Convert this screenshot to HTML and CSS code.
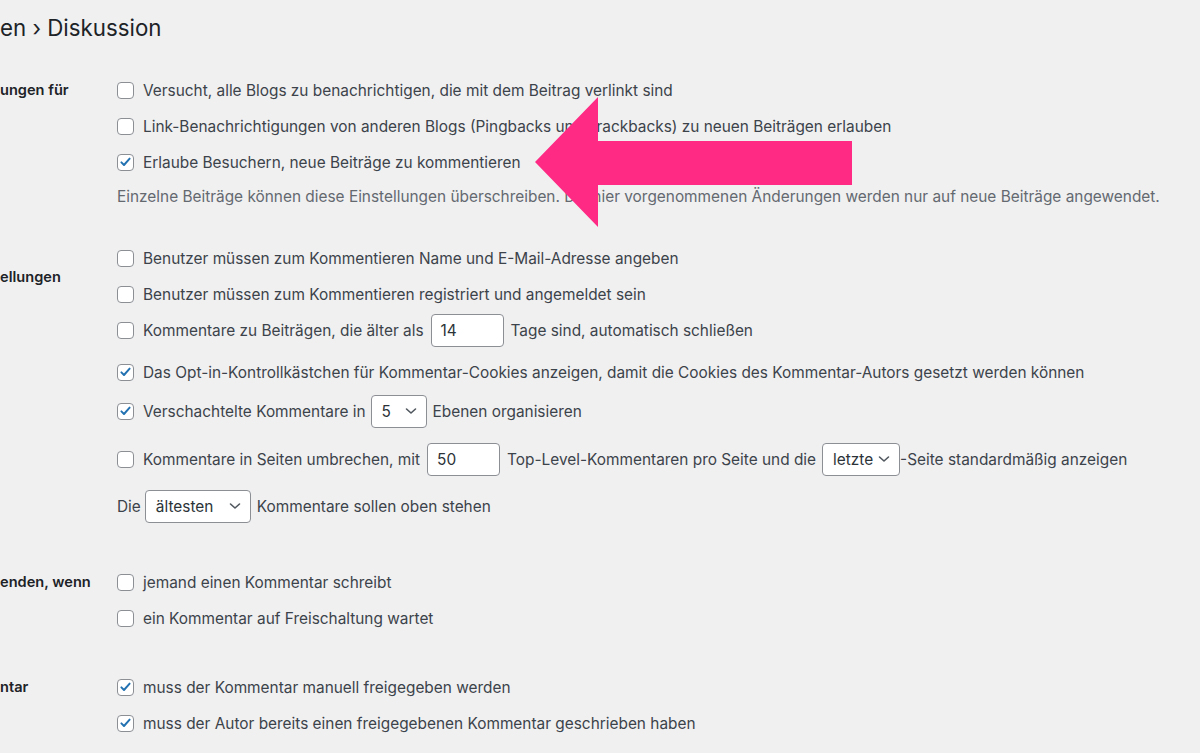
FILE: index.html
```html
<!DOCTYPE html>
<html lang="de">
<head>
<meta charset="UTF-8">
<title>Einstellungen › Diskussion</title>
<link rel="stylesheet" href="styles.css">
</head>
<body>
<div class="wrap">
    <h1>en › Diskussion</h1>

    <div class="section">
        <div class="label">ungen für</div>
        <div class="fields">
            <div class="opt"><span class="cb"></span>Versucht, alle Blogs zu benachrichtigen, die mit dem Beitrag verlinkt sind</div>
            <div class="opt"><span class="cb"></span>Link-Benachrichtigungen von anderen Blogs (Pingbacks und Trackbacks) zu neuen Beiträgen erlauben</div>
            <div class="opt"><span class="cb"><svg viewBox="0 0 20 20"><path d="M4.5 10.5 L8 14 L15.5 5.5"/></svg></span>Erlaube Besuchern, neue Beiträge zu kommentieren</div>
            <p class="desc">Einzelne Beiträge können diese Einstellungen überschreiben. Die hier vorgenommenen Änderungen werden nur auf neue Beiträge angewendet.</p>
        </div>
    </div>

    <div class="section s2">
        <div class="label label-low">ellungen</div>
        <div class="fields">
            <div class="opt"><span class="cb"></span>Benutzer müssen zum Kommentieren Name und E-Mail-Adresse angeben</div>
            <div class="opt"><span class="cb"></span>Benutzer müssen zum Kommentieren registriert und angemeldet sein</div>
            <div class="opt"><span class="cb"></span>Kommentare zu Beiträgen, die älter als <span class="num">14</span> Tage sind, automatisch schließen</div>
            <div class="opt mt6"><span class="cb"><svg viewBox="0 0 20 20"><path d="M4.5 10.5 L8 14 L15.5 5.5"/></svg></span>Das Opt-in-Kontrollkästchen für Kommentar-Cookies anzeigen, damit die Cookies des Kommentar-Autors gesetzt werden können</div>
            <div class="opt mt3"><span class="cb"><svg viewBox="0 0 20 20"><path d="M4.5 10.5 L8 14 L15.5 5.5"/></svg></span>Verschachtelte Kommentare in <span class="sel sel-depth">5<svg viewBox="0 0 12 12"><path d="M1.5 4 L6 8 L10.5 4"/></svg></span> Ebenen organisieren</div>
            <div class="opt mt12"><span class="cb"></span>Kommentare in Seiten umbrechen, mit <span class="num">50</span> Top-Level-Kommentaren pro Seite und die <span class="sel sel-page">letzte<svg viewBox="0 0 12 12"><path d="M1.5 4 L6 8 L10.5 4"/></svg></span>-Seite standardmäßig anzeigen</div>
            <div class="opt mt11">Die <span class="sel sel-order">ältesten<svg viewBox="0 0 12 12"><path d="M1.5 4 L6 8 L10.5 4"/></svg></span> Kommentare sollen oben stehen</div>
        </div>
    </div>

    <div class="section s3">
        <div class="label">enden, wenn</div>
        <div class="fields">
            <div class="opt"><span class="cb"></span>jemand einen Kommentar schreibt</div>
            <div class="opt"><span class="cb"></span>ein Kommentar auf Freischaltung wartet</div>
        </div>
    </div>

    <div class="section s4">
        <div class="label">ntar</div>
        <div class="fields">
            <div class="opt"><span class="cb"><svg viewBox="0 0 20 20"><path d="M4.5 10.5 L8 14 L15.5 5.5"/></svg></span>muss der Kommentar manuell freigegeben werden</div>
            <div class="opt"><span class="cb"><svg viewBox="0 0 20 20"><path d="M4.5 10.5 L8 14 L15.5 5.5"/></svg></span>muss der Autor bereits einen freigegebenen Kommentar geschrieben haben</div>
        </div>
    </div>

    <!-- marker arrow over the screenshot -->
    <svg class="arrow" viewBox="0 0 1200 753">
        <polygon points="535,162 598,97 598,141 852,141 852,185 598,185 598,227"/>
    </svg>
</div>
</body>
</html>
```

FILE: styles.css
```css
body {
    margin: 0;
    background-color: #f0f0f1;
    font-family: Inter, "Open Sans", sans-serif;
    color: #3c434a;
    font-size: 15.4px;
}

.wrap {
    position: relative;
    height: 753px;
    overflow: hidden;
}

h1 {
    margin: 0;
    padding-top: 12px;
    font-size: 22.3px;
    line-height: 32px;
    font-weight: 400;
    color: #1d2327;
}

.section {
    display: grid;
    grid-template-columns: 117px 1fr;
    margin-top: 28px;
}
.s2 {
    margin-top: 32px;
}
.s3 {
    margin-top: 40px;
}
.s4 {
    margin-top: 33px;
}

.label {
    font-weight: 600;
    font-size: 14.6px;
    color: #1d2327;
    height: 36px;
    line-height: 36px;
}
.label-low {
    padding-top: 19px;
}

.opt {
    display: flex;
    align-items: center;
    height: 36px;
    white-space: nowrap;
}
.mt3 { margin-top: 3px; }
.mt6 { margin-top: 6px; }
.mt11 { margin-top: 11px; }
.mt12 { margin-top: 12px; }

.cb {
    box-sizing: border-box;
    width: 17px;
    height: 17px;
    margin-right: 9px;
    border: 1px solid #8c8f94;
    border-radius: 4px;
    background-color: #fff;
    display: flex;
    align-items: center;
    justify-content: center;
}
.cb svg {
    width: 16px;
    height: 16px;
}
.cb path {
    fill: none;
    stroke: #2271b1;
    stroke-width: 2.6;
    stroke-linecap: round;
    stroke-linejoin: round;
}

.desc {
    margin: 6px 0 0 0;
    line-height: 22px;
    color: #646970;
    white-space: nowrap;
}

.num, .sel {
    box-sizing: border-box;
    height: 33px;
    display: inline-flex;
    align-items: center;
    background-color: #fff;
    border: 1px solid #8c8f94;
    border-radius: 4px;
    margin: 0 7px;
    color: #2c3338;
}
.num {
    width: 73px;
    padding-left: 9px;
}
.sel {
    padding-left: 10px;
    justify-content: space-between;
    padding-right: 9px;
}
.sel svg {
    width: 12px;
    height: 12px;
}
.sel path {
    fill: none;
    stroke: #50575e;
    stroke-width: 1.6;
    stroke-linecap: round;
    stroke-linejoin: round;
}
.sel-depth {
    width: 56px;
    margin-left: 5px;
    margin-right: 6px;
}
.sel-page {
    width: 78px;
    margin-left: 6px;
    margin-right: 0;
}
.sel-order {
    width: 106px;
    margin-left: 4px;
    margin-right: 6px;
}

.arrow {
    position: absolute;
    left: 0;
    top: 0;
    width: 1200px;
    height: 753px;
}
.arrow polygon {
    fill: #fe2a84;
}
```
